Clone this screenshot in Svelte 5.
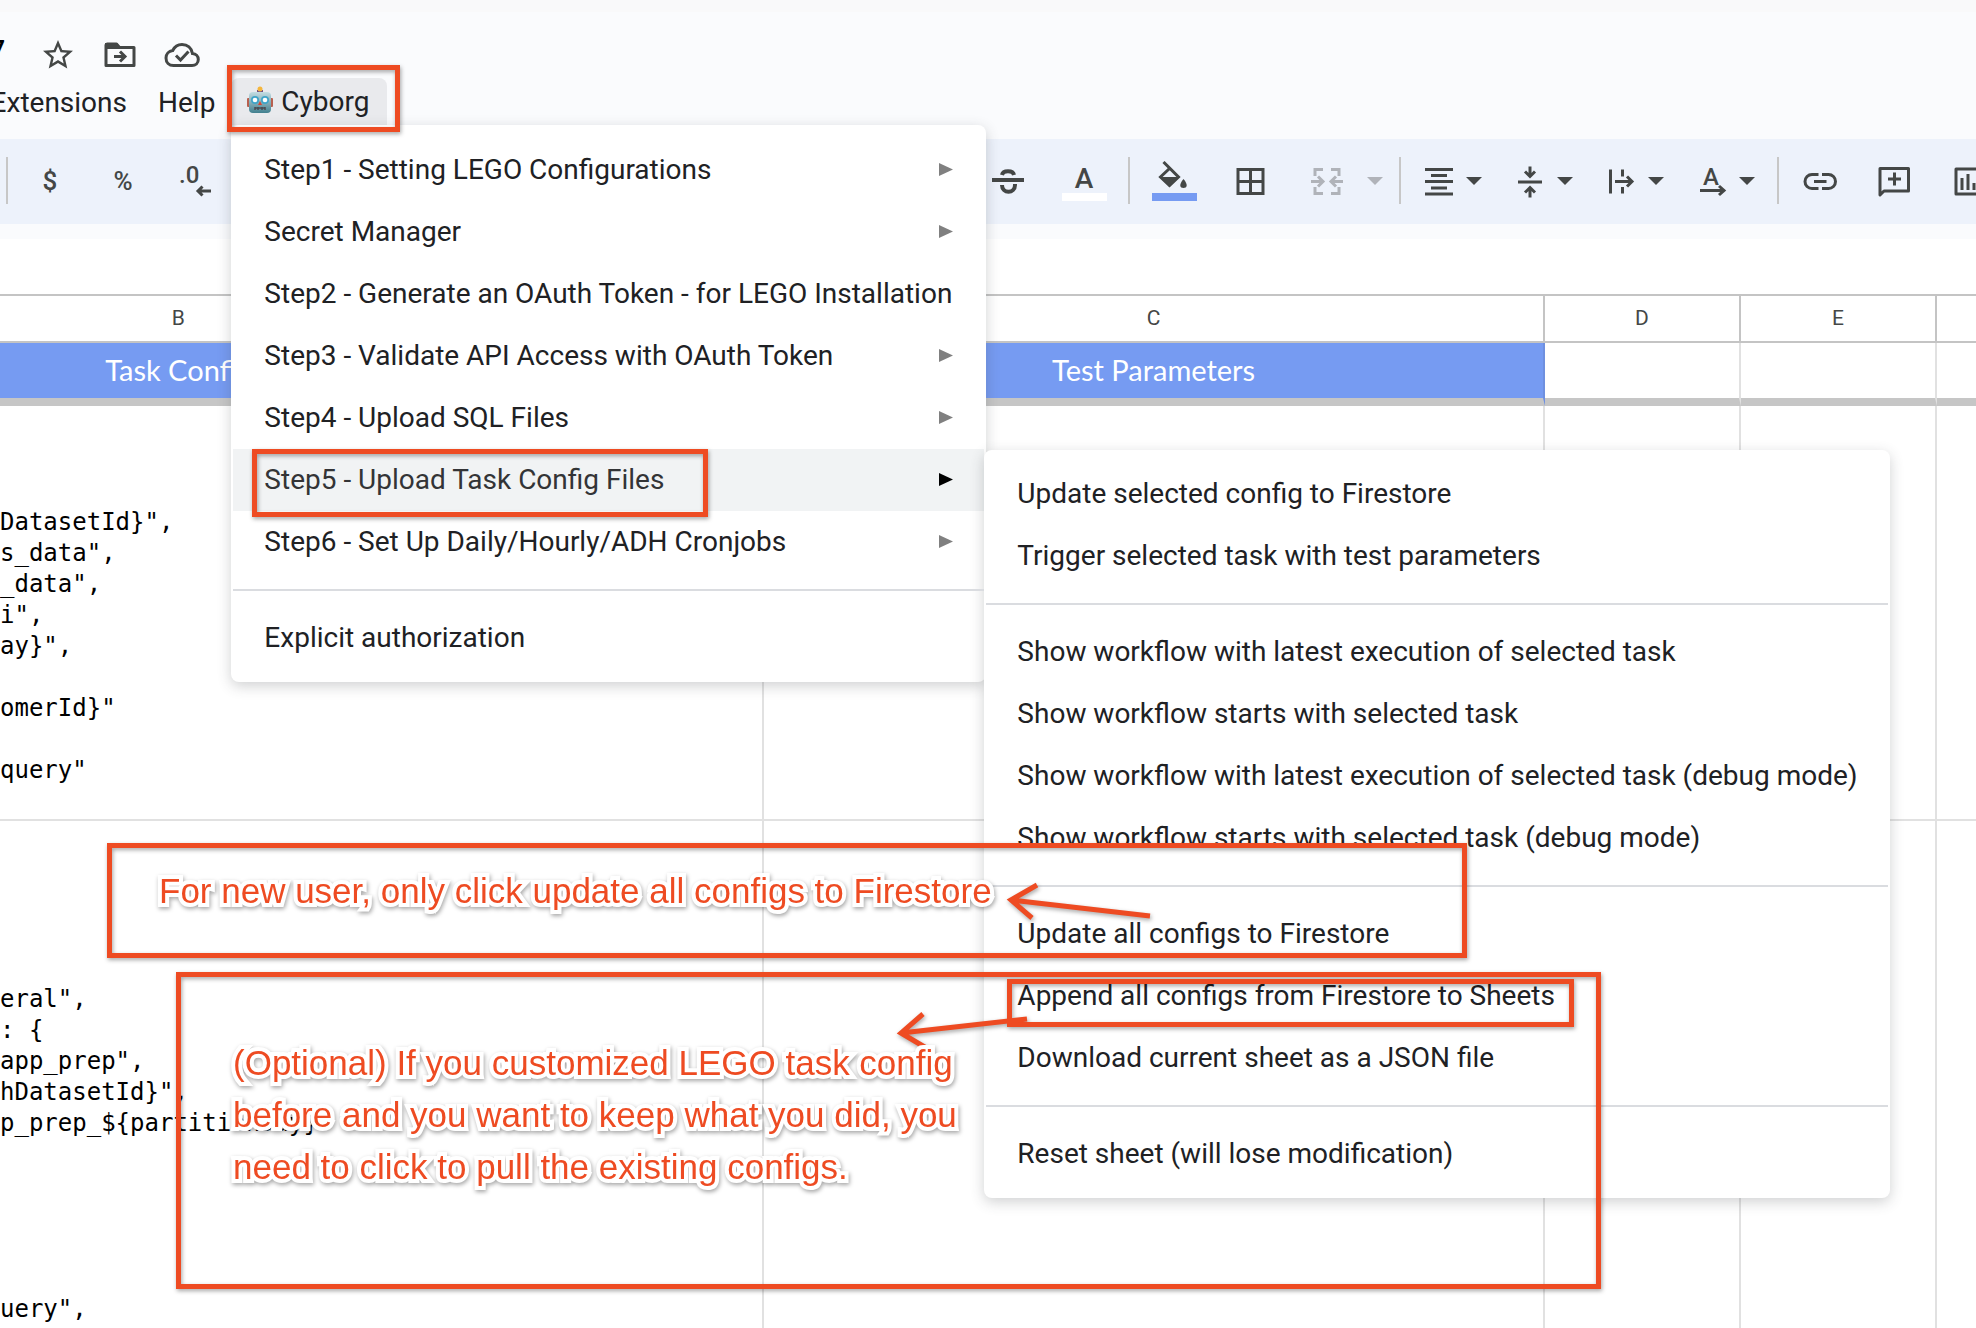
<script>
  const menuItems = [
    { label: 'Step1 - Setting LEGO Configurations', arrow: true },
    { label: 'Secret Manager', arrow: true },
    { label: 'Step2 - Generate an OAuth Token - for LEGO Installation' },
    { label: 'Step3 - Validate API Access with OAuth Token', arrow: true },
    { label: 'Step4 - Upload SQL Files', arrow: true },
    { label: 'Step5 - Upload Task Config Files', arrow: true, open: true },
    { label: 'Step6 - Set Up Daily/Hourly/ADH Cronjobs', arrow: true },
    { divider: true },
    { label: 'Explicit authorization' }
  ];

  const subItems = [
    { label: 'Update selected config to Firestore' },
    { label: 'Trigger selected task with test parameters' },
    { divider: true },
    { label: 'Show workflow with latest execution of selected task' },
    { label: 'Show workflow starts with selected task' },
    { label: 'Show workflow with latest execution of selected task (debug mode)' },
    { label: 'Show workflow starts with selected task (debug mode)' },
    { divider: true },
    { label: 'Update all configs to Firestore' },
    { label: 'Append all configs from Firestore to Sheets' },
    { label: 'Download current sheet as a JSON file' },
    { divider: true },
    { label: 'Reset sheet (will lose modification)' }
  ];

  const firstCode = ['DatasetId}",', 's_data",', '_data",', 'i",', 'ay}",', '', 'omerId}"', '', 'query"'].join('\n');
  const secondCode = [
    'eral",', ': {', 'app_prep",', 'hDatasetId}",', 'p_prep_${partitionDay}"',
    '', '', '', '', '', 'uery",'
  ].join('\n');
</script>

{#snippet caret()}
  <svg class="caret" viewBox="0 0 16 8" aria-hidden="true"><path d="M0 0h16l-8 8z" /></svg>
{/snippet}

<div class="page">
  <header>
    <div class="title-row">
      <span class="doc-title">7</span>
      <button class="plain" aria-label="Star">
        <svg class="solid" viewBox="0 0 24 24"><path d="M22 9.24l-7.19-.62L12 2 9.19 8.63 2 9.24l5.46 4.73L5.82 21 12 17.27 18.18 21l-1.63-7.03L22 9.24zM12 15.4l-3.76 2.27 1-4.28-3.32-2.88 4.38-.38L12 6.1l1.71 4.04 4.38.38-3.32 2.88 1 4.28L12 15.4z" /></svg>
      </button>
      <button class="plain" aria-label="Move">
        <svg class="line" viewBox="0 0 36 36"><path d="M4 8v20.500h28V10.500H17.500l-3-3.500H5z" stroke-linejoin="round" /><path d="M3 6h12l5 6H3z" fill="currentColor" stroke="none" /><path d="M12 19.500h10M18 14.500l5 5-5 5" /></svg>
      </button>
      <button class="plain" aria-label="Document status">
        <svg class="line" viewBox="0 0 36 36"><path d="M28.500 16.500C27.500 11 23.500 7.500 18 7.500c-4.300 0-7.500 2.300-9.300 6C4.800 14 2 17 2 21c0 4.400 3 7.500 7.500 7.500H28c3.500 0 6.300-2.500 6.300-6s-2.500-5.800-5.800-6z" /><path d="M12 18.500l4.500 4.500 8-8.500" /></svg>
      </button>
    </div>
    <nav class="menubar">
      <button class="menu-name clipped"><span>Extensions</span></button>
      <button class="menu-name">Help</button>
      <div class="cyborg">
        <button class="menu-name active">
          <svg class="robot" viewBox="0 0 26 28" aria-hidden="true">
            <defs>
              <linearGradient id="robot-face" x1="0" y1="0" x2="0" y2="1">
                <stop offset="0" stop-color="#c3dde2" />
                <stop offset="0.5" stop-color="#86aeb8" />
                <stop offset="1" stop-color="#41808f" />
              </linearGradient>
            </defs>
            <rect x="0" y="12" width="3" height="9" rx="1" fill="#b8604f" />
            <rect x="23" y="12" width="3" height="9" rx="1" fill="#b8604f" />
            <rect x="10" y="4" width="6" height="3" fill="#6d4d86" />
            <circle cx="13" cy="3" r="2.500" fill="#f5b63c" />
            <rect x="2" y="6" width="22" height="21" rx="4" fill="url(#robot-face)" />
            <circle cx="8" cy="14" r="4" fill="#3fa5c8" />
            <circle cx="18" cy="14" r="4" fill="#3fa5c8" />
            <circle cx="8" cy="14" r="2.300" fill="#fff" />
            <circle cx="18" cy="14" r="2.300" fill="#fff" />
            <path d="M13 15l2 4h-4z" fill="#d8452f" />
            <path d="M8 22h10M8 24v-3M11 24v-3M15 24v-3M18 24v-3" stroke="#4a4a50" stroke-width="1.500" />
          </svg>
          Cyborg
        </button>
        <ul class="menu main-menu">
          {#each menuItems as item}
            {#if item.divider}
              <li class="divider"></li>
            {:else}
              <li class:open={item.open}>
                <button>
                  {item.label}
                  {#if item.arrow}
                    <svg class="arrow" viewBox="0 0 14 13" aria-hidden="true"><path d="M0 0l14 6.500-14 6.500z" /></svg>
                  {/if}
                </button>
                {#if item.open}
                  <ul class="menu sub-menu">
                    {#each subItems as sub}
                      {#if sub.divider}
                        <li class="divider"></li>
                      {:else}
                        <li><button>{sub.label}</button></li>
                      {/if}
                    {/each}
                  </ul>
                {/if}
              </li>
            {/if}
          {/each}
        </ul>
      </div>
    </nav>
  </header>

  <div class="toolbar">
    <div class="formats">
      <i class="sep"></i>
      <button class="tool sign" aria-label="Currency">$</button>
      <button class="tool sign" aria-label="Percent">%</button>
      <button class="tool" aria-label="Decrease decimal places">
        <svg class="line" viewBox="0 0 36 36"><text x="1" y="20" font-size="24">.0</text><path d="M33 28H20M24.500 23.500L20 28l4.500 4.500" /></svg>
      </button>
    </div>
    <div class="styles">
      <button class="tool" aria-label="Strikethrough">
        <svg class="line thick" viewBox="0 0 36 36"><path d="M2 17h32M12 12c1-5 11-5 12 0M12 22c0 9 13 9 13 0v-1" /></svg>
      </button>
      <button class="tool stacked" aria-label="Text color">
        <span class="letter">A</span><i class="swatch white"></i>
      </button>
      <i class="sep"></i>
      <button class="tool stacked" aria-label="Fill color">
        <svg class="bucket" viewBox="0 0 36 28"><path d="M7.500 1l15 15-9 8.500L4.500 16l9-8.500" fill="none" stroke="currentColor" stroke-width="3" /><path d="M3.500 16h20l-10 10zM27.500 18c5 6 3.500 9 0 9s-5-3 0-9z" fill="currentColor" /></svg>
        <i class="swatch"></i>
      </button>
      <button class="tool" aria-label="Borders">
        <svg class="line" viewBox="0 0 36 36"><path d="M6 6.500h25v24H6zM18.500 6v25M6 18.500h25" /></svg>
      </button>
      <button class="drop merge" aria-label="Merge cells" disabled>
        <svg class="line" viewBox="0 0 36 36"><path d="M14 6.500H6V13M6 24v6.500h8M22 6.500h8V13M30 24v6.500h-8M2 18.500h11M9 13.500l5 5-5 5M34 18.500H23M27 13.500l-5 5 5 5" /></svg>
        {@render caret()}
      </button>
      <i class="sep"></i>
      <button class="drop" aria-label="Horizontal align">
        <svg class="line" viewBox="0 0 36 36"><path d="M4 6.500h28M10 12.500h16M4 18.500h28M10 25h16M4 31h28" /></svg>
        {@render caret()}
      </button>
      <button class="drop" aria-label="Vertical align">
        <svg class="line" viewBox="0 0 36 36"><path d="M6 19h24M18 3.500v9M13 8.500l5 5 5-5M18 34.500v-9M13 29.500l5-5 5 5" /></svg>
        {@render caret()}
      </button>
      <button class="drop" aria-label="Text wrapping">
        <svg class="line" viewBox="0 0 36 36"><path d="M7.500 6.500v24M19.500 6.500v7M19.500 24v6.500M12 18.500h16M24 13.500l5 5-5 5" /></svg>
        {@render caret()}
      </button>
      <button class="drop" aria-label="Text rotation">
        <svg class="line" viewBox="0 0 36 36"><text x="9" y="22" font-size="24">A</text><path d="M6 27.500h23M25 23l5 4.500-5 4.500" /></svg>
        {@render caret()}
      </button>
      <i class="sep"></i>
      <div class="insert">
        <button class="tool" aria-label="Insert link">
          <svg class="line" viewBox="0 0 36 36"><path d="M16.500 11.500H10a7 7 0 0 0 0 14h6.500M20 11.500h6.500a7 7 0 0 1 0 14H20M12 18.500h12.500" /></svg>
        </button>
        <button class="tool" aria-label="Insert comment">
          <svg class="line" viewBox="0 0 36 36"><path d="M4 5.500h28.500v22.500H8l-4 4z" stroke-linejoin="round" /><path d="M18.500 9.500v13M12 16h13" /></svg>
        </button>
        <button class="tool" aria-label="Insert chart">
          <svg class="line" viewBox="0 0 36 36"><path d="M6 6h25v25H6z" stroke-linejoin="round" /><path d="M12 15v12M18 11v16M24 20v7" /></svg>
        </button>
      </div>
    </div>
  </div>
  <div class="formula-gap"></div>

  <div class="sheet">
    <table>
      <colgroup><col class="b" /><col class="c" /><col class="d" /><col class="d" /><col class="d" /></colgroup>
      <thead>
        <tr class="letters"><th>B</th><th>C</th><th>D</th><th>E</th><th></th></tr>
        <tr class="names"><td class="blue">Task Config</td><td class="blue">Test Parameters</td><td></td><td></td><td></td></tr>
      </thead>
      <tbody>
        <tr class="first"><td><pre>{firstCode}</pre></td><td></td><td></td><td></td><td></td></tr>
        <tr class="second"><td><pre>{secondCode}</pre></td><td></td><td></td><td></td><td></td></tr>
      </tbody>
    </table>
  </div>

  <div class="marks">
    <div class="box mark-menu"></div>
    <div class="box mark-step"></div>
    <div class="box mark-update"></div>
    <div class="box mark-optional"></div>
    <div class="box mark-append"></div>
    <svg class="arrows" viewBox="0 0 1976 1328" aria-hidden="true">
      <path d="M1150 916L1011 900M1037 885l-26 15 21 18" />
      <path d="M1027 1019L901 1033M923 1014l-22 19 27 16" />
    </svg>
    <p class="note new-user">For new user, only click update all configs to Firestore</p>
    <p class="note optional">(Optional) If you customized LEGO task config<br />before and you want to keep what you did, you<br />need to click to pull the existing configs.</p>
  </div>
</div>

<style>
  :global(body) {
    margin: 0;
    background: #fff;
  }
  .page {
    position: relative;
    height: 100vh;
    overflow: hidden;
    font-family: Roboto, 'Liberation Sans', sans-serif;
    color: #202124;
  }
  button {
    font: inherit;
    color: inherit;
    border: 0;
    padding: 0;
    margin: 0;
    background: none;
    white-space: nowrap;
  }
  svg {
    display: block;
    flex: none;
  }
  ul {
    list-style: none;
    margin: 0;
  }

  header {
    box-sizing: border-box;
    background: linear-gradient(#f9f9fa 12px, #fafbfd 12px);
    padding-top: 36px;
    height: 139px;
  }
  .title-row {
    display: flex;
    align-items: center;
    gap: 26px;
    height: 38px;
    color: #444746;
  }
  .doc-title {
    display: flex;
    justify-content: flex-end;
    width: 5px;
    margin-right: 9px;
    overflow: hidden;
    font-size: 24px;
    line-height: 28px;
    margin-bottom: 12px;
    color: #000;
    font-weight: 700;
  }
  .title-row svg {
    width: 36px;
    height: 36px;
  }
  .solid {
    fill: currentColor;
  }
  .line {
    width: 36px;
    height: 36px;
    fill: none;
    stroke: currentColor;
    stroke-width: 3;
  }
  .thick {
    stroke-width: 4;
  }
  .line text {
    fill: currentColor;
    stroke: none;
    font-weight: 500;
  }

  .menubar {
    display: flex;
    align-items: center;
    margin-top: 4px;
    font-size: 28px;
  }
  .menu-name {
    height: 47px;
    padding-top: 2px;
  }
  .clipped {
    display: flex;
    align-items: center;
    justify-content: flex-end;
    width: 127px;
    margin-right: 31px;
    overflow: hidden;
  }
  .cyborg {
    position: relative;
    z-index: 2;
    margin-left: 16px;
  }
  .active {
    display: flex;
    align-items: center;
    gap: 8px;
    padding: 0 18px 0 16px;
    background: #e9eaed;
    border-radius: 8px 8px 0 0;
  }
  .robot {
    width: 26px;
    height: 28px;
    margin-bottom: 4px;
  }

  .menu {
    position: absolute;
    box-sizing: border-box;
    background: #fff;
    border-radius: 8px;
    box-shadow: 0 4px 14px rgba(60, 64, 67, 0.24);
    font-size: 28px;
  }
  .main-menu {
    left: 0;
    top: 100%;
    width: 755px;
    padding: 14px 2px 13px;
  }
  .sub-menu {
    left: 100%;
    top: 1px;
    width: 906px;
    padding: 13px 2px;
  }
  .menu li {
    position: relative;
  }
  .menu li > button {
    display: flex;
    align-items: center;
    justify-content: space-between;
    width: 100%;
    height: 62px;
    padding: 0 31px 2px;
  }
  .menu .divider {
    height: 2px;
    margin: 16px 0;
    background: #dadce0;
  }
  .open > button {
    background: #f1f3f4;
    color: #333436;
  }
  .arrow {
    width: 14px;
    height: 13px;
    fill: #808080;
  }
  .open .arrow {
    fill: #000;
  }

  .toolbar {
    display: flex;
    box-sizing: border-box;
    height: 100px;
    padding-bottom: 2px;
    background: #edf2fb;
    border-bottom: 15px solid #fafbfd;
    color: #444746;
    overflow: hidden;
  }
  .formats,
  .styles {
    display: flex;
    align-items: center;
    flex: none;
  }
  .formats {
    box-sizing: border-box;
    width: 985px;
  }
  .formats .tool {
    margin: 0 14px 0 13px;
  }
  .sign {
    font-size: 26px;
    font-weight: 500;
  }
  .sep {
    flex: none;
    width: 2px;
    height: 47px;
    margin: 0 6px;
    background: #c7c7c7;
  }
  .tool {
    display: flex;
    justify-content: center;
    align-items: center;
    flex: none;
    width: 46px;
    margin: 0 15px;
  }
  .styles > .tool:first-child {
    margin-left: 0;
  }
  .stacked {
    flex-direction: column;
    gap: 4px;
  }
  .letter {
    height: 28px;
    font-size: 28px;
    line-height: 36px;
    font-weight: 500;
  }
  .bucket {
    width: 36px;
    height: 28px;
  }
  .swatch {
    width: 45px;
    height: 8px;
    background: #769bf2;
  }
  .swatch.white {
    background: #fff;
  }
  .drop {
    display: flex;
    align-items: center;
    gap: 9px;
    margin: 0 16px 0 14px;
  }
  .merge {
    gap: 22px;
    margin: 0 10px 0 21px;
    color: #b0b3b9;
  }
  .caret {
    width: 16px;
    height: 8px;
    fill: currentColor;
  }
  .insert {
    display: flex;
    gap: 28px;
    margin-left: 12px;
  }
  .insert .tool {
    margin: 0;
  }
  .formula-gap {
    height: 55px;
  }

  table {
    table-layout: fixed;
    width: 2539px;
    margin-left: -406px;
    border-collapse: separate;
    border-spacing: 0;
  }
  .b {
    width: 1170px;
  }
  .c {
    width: 780px;
  }
  .d {
    width: 196px;
  }
  th,
  td {
    box-sizing: border-box;
    padding: 0;
    border-right: 2px solid #e1e1e1;
    border-bottom: 2px solid #e1e1e1;
    vertical-align: top;
  }
  .letters th {
    height: 49px;
    padding-bottom: 2px;
    border-color: #c4c4c4;
    border-top: 2px solid #c4c4c4;
    font-size: 21px;
    font-weight: 400;
    color: #444746;
    vertical-align: middle;
  }
  .names td {
    height: 63px;
    padding-bottom: 2px;
    border-bottom: 8px solid #c6c6c6;
    font-family: Lato, sans-serif;
    font-size: 29px;
    color: #fff;
    text-align: center;
    vertical-align: middle;
  }
  .names .blue {
    background: #769bf2;
    background-clip: padding-box;
    border-right-color: #6f90df;
  }
  pre {
    margin: 0;
    padding-left: 406px;
    font-family: 'DejaVu Sans Mono', 'Liberation Mono', monospace;
    font-size: 24px;
    line-height: 31px;
    color: #000;
  }
  .first td {
    height: 415px;
    padding-top: 101px;
  }
  .second td {
    padding: 163px 0 20px;
  }

  .marks {
    position: absolute;
    inset: 0;
    z-index: 3;
    pointer-events: none;
    filter: drop-shadow(1px 2px 2px rgba(0, 0, 0, 0.35));
  }
  .box {
    position: absolute;
    box-sizing: border-box;
    border: 5px solid #ee4b22;
  }
  .mark-menu {
    left: 227px;
    top: 65px;
    width: 173px;
    height: 67px;
  }
  .mark-step {
    left: 252px;
    top: 449px;
    width: 456px;
    height: 68px;
  }
  .mark-update {
    left: 107px;
    top: 843px;
    width: 1360px;
    height: 115px;
  }
  .mark-optional {
    left: 176px;
    top: 972px;
    width: 1425px;
    height: 317px;
  }
  .mark-append {
    left: 1007px;
    top: 979px;
    width: 567px;
    height: 48px;
  }
  .arrows {
    position: absolute;
    left: 0;
    top: 0;
    width: 1976px;
    height: 1328px;
    fill: none;
    stroke: #ee4b22;
    stroke-width: 5;
  }
  .note {
    position: absolute;
    margin: 0;
    font-family: 'Liberation Sans', Arial, sans-serif;
    font-size: 35px;
    line-height: 52px;
    color: #ee4b22;
    white-space: nowrap;
    -webkit-text-stroke: 8px #fff;
    paint-order: stroke fill;
    stroke-linejoin: round;
  }
  .new-user {
    left: 159px;
    top: 865px;
  }
  .optional {
    left: 233px;
    top: 1037px;
  }
</style>
